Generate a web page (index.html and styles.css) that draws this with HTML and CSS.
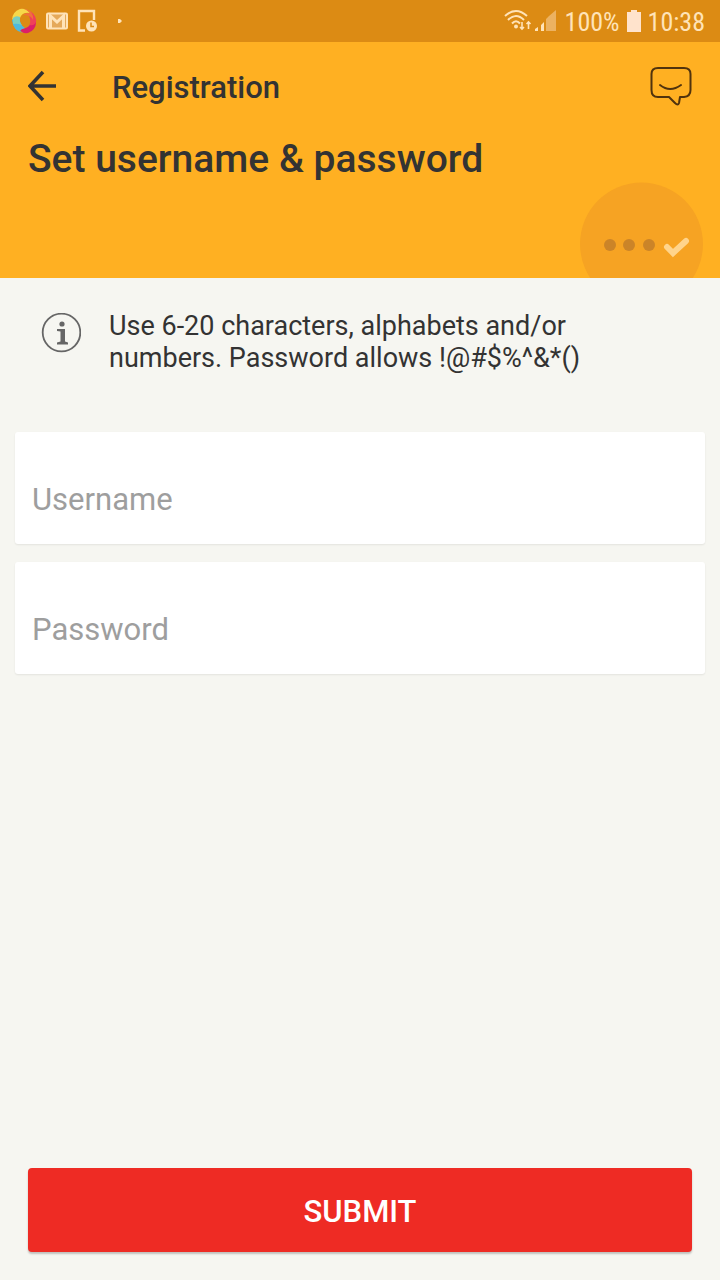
FILE: index.html
```html
<!DOCTYPE html>
<html lang="en">
<head>
<meta charset="utf-8">
<meta name="viewport" content="width=device-width, initial-scale=1">
<title>Registration</title>
<link rel="stylesheet" href="styles.css">
</head>
<body>
<div class="screen">
  <div class="status">
    <div class="status-group notices">
      <svg width="26" height="26" viewBox="0 0 26 26">
        <path d="M1 12Q1 4 9 1Q15 0 19 5Q11 4 9 10Q5 8 1 12Z" fill="#f7d84a"/>
        <path d="M13 1Q19 1 23 7Q24 10 22 14Q20 6 12 7Q14 5 19 5Q16 2 13 1Z" fill="#f2703c"/>
        <path d="M19 3Q26 8 25 15Q23 20 17 20Q21 14 18 8Q22 10 22 13Q23 7 19 3Z" fill="#f0405a"/>
        <path d="M25 14Q25 22 17 25Q11 26 8 21Q16 21 19 17Q23 18 25 14Z" fill="#dc1f68"/>
        <path d="M1 12Q5 8 9 10Q8 16 14 20Q10 21 9 23L12 25Q2 23 1 12Z" fill="#4fb9dc"/>
        <path d="M2 10Q5 7 9 9Q8 14 11 17Q6 15 2 16Z" fill="#79cfc0"/>
      </svg>
      <svg width="22" height="18" viewBox="0 0 22 18">
        <rect x="1" y="1.500" width="20" height="15" rx="1" fill="#e5a95a" stroke="#ffe3b8" stroke-width="2"/>
        <path d="M4.500 16V4l6.500 6 6.500-6v12" fill="none" stroke="#ffe3b8" stroke-width="3"/>
      </svg>
      <svg width="21" height="24" viewBox="0 0 21 24" fill="none" stroke="#ffe3b8">
        <path d="M8 21.500H2V2H17V11" stroke-width="2.400"/>
        <circle cx="14.500" cy="17" r="5.500" fill="#ffe3b8" stroke="none"/>
        <path d="M14 13.500V17.500H17" stroke="#dc8b14" stroke-width="1.500"/>
      </svg>
      <svg class="more" width="4" height="6" viewBox="0 0 4 6"><path d="M0 1h2l2 2-2 2H0Z" fill="#ffe3b8"/></svg>
    </div>
    <div class="status-group">
      <svg width="54" height="24" viewBox="0 0 54 24" fill="none" stroke="#ffe3b8" stroke-width="2">
        <path d="M1 7Q12-3 23 7M4 11Q12 3 20 11M8 14.500Q12 10 16 14.500"/>
        <circle cx="12" cy="17.500" r="2" fill="#ffe3b8" stroke="none"/>
        <path d="M18 13v7m-2-2 2 2 2-2M24.500 20v-7m-2 2 2-2 2 2" stroke-width="1.600"/>
        <path d="M31 22v-2l3-2v4ZM37 22v-6l3-3v9Z" fill="#ffe3b8" stroke="none"/>
        <path d="M42 22V10l3-3v15ZM45 22V7l7-6v21Z" fill="#ecb261" stroke="none"/>
      </svg>
      <span class="status-text">100%</span>
      <svg width="14" height="22" viewBox="0 0 14 22"><path d="M4 0h6v2h4v20H0V2h4Z" fill="#ffe3cc"/></svg>
      <span class="status-text">10:38</span>
    </div>
  </div>
  <header class="header">
    <div class="toolbar">
      <button class="icon-button" type="button" aria-label="Back">
        <svg width="30" height="32" viewBox="0 0 30 32" fill="none" stroke="#333" stroke-width="3.500"><path d="M15 2 2 16l13 14M2 16H28"/></svg>
      </button>
      <h2 class="title">Registration</h2>
      <button class="icon-button chat" type="button" aria-label="Chat">
        <svg width="42" height="40" viewBox="0 0 42 40" fill="none" stroke="#51330d" stroke-width="2" stroke-linecap="round" stroke-linejoin="round">
          <path d="M8 2H34Q40.500 2 40.500 8V24Q40.500 30.500 34 31H30L29 37Q28 40 25 37L19 31H8Q1.500 31 1.500 24V8Q1.500 2 8 2Z"/>
          <path d="M10 19Q20 27 31 19"/>
        </svg>
      </button>
    </div>
    <h1 class="heading">Set username &amp; password</h1>
    <svg class="badge" width="124" height="96" viewBox="0 0 124 96">
      <circle cx="61.500" cy="62" r="61.500" fill="#f6a323"/>
      <g fill="#cb8428"><circle cx="30" cy="63" r="6"/><circle cx="49" cy="63" r="6"/><circle cx="69" cy="63" r="6"/></g>
      <path d="M87 65l6 6 13-12" fill="none" stroke="#ffd48c" stroke-width="6" stroke-linecap="round"/>
    </svg>
  </header>
  <main class="content">
    <div class="info">
      <svg class="info-icon" width="40" height="40" viewBox="0 0 40 40">
        <circle cx="20.500" cy="19.500" r="18.800" fill="none" stroke="#666" stroke-width="1.800"/>
        <circle cx="21" cy="11" r="2.600" fill="#666"/>
        <path d="M16 16h8v12.500l3 1v2H16v-2l3.500-1V18.500L16 18Z" fill="#666"/>
      </svg>
      <p class="info-text">Use 6-20 characters, alphabets and/or numbers. Password allows !@#$%^&amp;*()</p>
    </div>
    <form class="form" id="register">
      <input class="field" type="text" placeholder="Username" aria-label="Username">
      <input class="field" type="password" placeholder="Password" aria-label="Password">
    </form>
  </main>
  <footer class="footer">
    <button class="submit" type="submit" form="register">SUBMIT</button>
  </footer>
</div>
</body>
</html>
```
FILE: styles.css
```css
* { box-sizing: border-box; }
body {
  margin: 0;
  font-family: Roboto, sans-serif;
  color: #333;
  background: #f6f6f1;
}
.screen {
  min-height: 100vh;
  display: flex;
  flex-direction: column;
}
.status {
  display: flex;
  justify-content: space-between;
  align-items: center;
  height: 42px;
  padding: 0 15px 0 11px;
  background: #dc8b14;
  color: #ffe3b8;
  font-family: "Roboto Condensed", Roboto, sans-serif;
  font-size: 26px;
  line-height: 30px;
}
.status svg { display: block; }
.status-group { display: flex; align-items: center; gap: 7px; }
.status-text { padding-top: 2px; }
.notices { gap: 9px; }
.more { margin-left: 11px; }
.header {
  position: relative;
  min-height: 236px;
  padding: 16px 28px;
  background: #ffb022;
}
.toolbar { display: flex; align-items: center; min-height: 56px; }
.icon-button {
  display: flex;
  padding: 0;
  border: 0;
  background: none;
}
.title {
  margin: 0 0 0 54px;
  padding-top: 3px;
  font-size: 31px;
  font-weight: 500;
  line-height: 40px;
}
.chat { margin-left: auto; }
.heading {
  margin: 21px 0 0;
  font-size: 39px;
  font-weight: 500;
  line-height: 48px;
}
.badge { position: absolute; right: 16px; bottom: 0; }
.info {
  display: flex;
  gap: 28px;
  padding: 32px 42px 0 41px;
}
.info-icon { flex: none; margin-top: 3px; }
.info-text {
  margin: 0;
  max-width: 500px;
  font-size: 27px;
  line-height: 32px;
}
.form {
  display: flex;
  flex-direction: column;
  gap: 18px;
  padding: 58px 15px 0;
}
.field {
  width: 100%;
  height: 112px;
  padding: 22px 17px 0;
  border: 0;
  border-radius: 3px;
  background: #fff;
  box-shadow: 0 1px 2px rgba(0, 0, 0, 0.08);
  font-family: inherit;
  font-size: 31px;
  color: #333;
}
.field::placeholder { color: #9e9e9e; opacity: 1; }
.footer { margin-top: auto; padding: 28px; }
.submit {
  display: block;
  width: 100%;
  height: 84px;
  padding: 2px 0 0;
  border: 0;
  border-radius: 4px;
  background: #ee2b24;
  box-shadow: 0 2px 2px rgba(0, 0, 0, 0.22);
  color: #fff;
  font-family: inherit;
  font-size: 31px;
  font-weight: 500;
}
```
